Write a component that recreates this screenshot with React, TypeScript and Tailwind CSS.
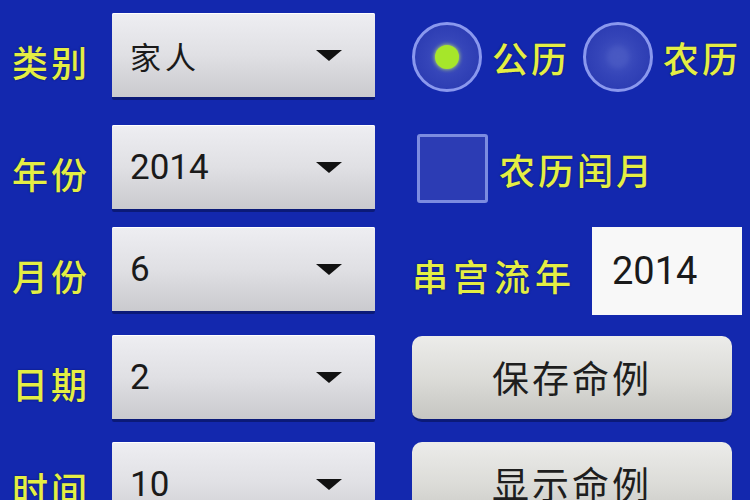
import React from 'react';

const cjk = "font-['Noto_Sans_CJK_SC',sans-serif]";
const num = "font-['Roboto','Noto_Sans_CJK_SC',sans-serif]";

const yellow = `text-[36px] font-medium leading-none tracking-[3px] text-[#e4ee44] ${cjk} [text-shadow:0_0_2px_#0a1460]`;

function Label({ text }: { text: string }) {
  return <div className={`w-[112px] pl-[12px] pt-[8px] ${yellow}`}>{text}</div>;
}

function Spinner({ value, digits }: { value: string; digits?: boolean }) {
  return (
    <div className="flex h-[87px] w-[263px] items-center justify-between rounded-[2px] border-b-[3px] border-[#0b1a78] bg-gradient-to-b from-[#eeeef2] via-[#e0e0e4] to-[#cacace] pl-[18px] pr-[32px] shadow-[inset_0_1px_0_#ffffff]">
      <span
        className={
          digits
            ? `text-[35px] leading-none text-[#1a1a1a] ${num}`
            : `text-[31px] leading-none tracking-[4px] text-[#1a1a1a] ${cjk}`
        }
      >
        {value}
      </span>
      <svg width="28" height="13" viewBox="0 0 28 13">
        <path d="M1 1 L27 1 L14 12 Z" fill="#111111" />
      </svg>
    </div>
  );
}

function Radio({ checked }: { checked?: boolean }) {
  return (
    <div className="flex h-[70px] w-[70px] items-center justify-center rounded-full border-[3px] border-[#8a98ee] bg-[radial-gradient(circle,#4656c2_0%,#3444b8_45%,#2636ae_100%)]">
      {checked ? (
        <div className="h-[24px] w-[24px] rounded-full bg-[#a6e62a] shadow-[0_0_4px_#c8f060]" />
      ) : (
        <div className="h-[22px] w-[22px] rounded-full bg-[#4c5cc4] opacity-60 blur-[2px]" />
      )}
    </div>
  );
}

function Button({ text }: { text: string }) {
  return (
    <div
      className={`flex h-[86px] w-[320px] items-center justify-center rounded-[10px] border-b-[3px] border-[#0b1a78] bg-gradient-to-b from-[#ececea] via-[#dcdcd8] to-[#c6c6c2] text-[37px] leading-none tracking-[3px] text-[#1e1e1e] ${cjk}`}
    >
      {text}
    </div>
  );
}

export default function App() {
  return (
    <div className="h-[500px] w-[750px] overflow-hidden bg-[#1328ae] pt-[13px]">
      <div className="flex h-[87px] items-center">
        <Label text="类别" />
        <Spinner value="家人" />
        <div className="ml-[37px] flex items-center">
          <Radio checked />
          <span className={`ml-[10px] ${yellow}`}>公历</span>
          <div className="ml-[13px]">
            <Radio />
          </div>
          <span className={`ml-[10px] whitespace-nowrap ${yellow}`}>农历</span>
        </div>
      </div>

      <div className="mt-[25px] flex h-[87px] items-center">
        <Label text="年份" />
        <Spinner value="2014" digits />
        <div className="ml-[42px] flex items-center">
          <div className="h-[69px] w-[71px] rounded-[3px] border-[3px] border-[#7c8ce0] bg-[#2c3cb4]" />
          <span className={`ml-[11px] ${yellow}`}>农历闰月</span>
        </div>
      </div>

      <div className="mt-[15px] flex h-[87px] items-center">
        <Label text="月份" />
        <Spinner value="6" digits />
        <div className="ml-[37px] flex h-full items-center">
          <span className={`mt-[8px] ${yellow} tracking-[5px]`}>串宫流年</span>
          <div
            className={`ml-[16px] flex h-[88px] w-[150px] items-center bg-[#f8f8f8] pl-[20px] text-[38px] leading-none text-[#1a1a1a] ${num}`}
          >
            2014
          </div>
        </div>
      </div>

      <div className="mt-[21px] flex h-[87px] items-center">
        <Label text="日期" />
        <Spinner value="2" digits />
        <div className="ml-[37px]">
          <Button text="保存命例" />
        </div>
      </div>

      <div className="mt-[20px] flex h-[87px] items-start">
        <div className="pt-[20px]">
          <Label text="时间" />
        </div>
        <Spinner value="10" digits />
        <div className="ml-[37px]">
          <Button text="显示命例" />
        </div>
      </div>
    </div>
  );
}
